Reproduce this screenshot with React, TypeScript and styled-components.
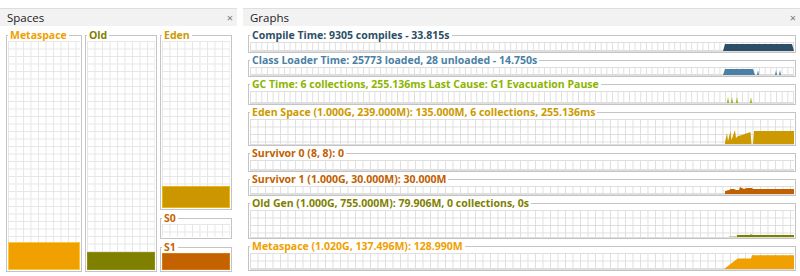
import React from 'react';
import styled, { createGlobalStyle } from 'styled-components';

const GlobalStyle = createGlobalStyle`
  html, body {
    margin: 0;
    padding: 0;
    background: #ffffff;
  }

  body {
    font-family: "Open Sans", "DejaVu Sans", sans-serif;
  }

  * {
    box-sizing: border-box;
  }
`;

type Space = {
  name: string;
  color: string;
  fill: string;
  edge: string;
  used: number;
  max: number;
};

type Shape = { points: string; fill?: string };

type Graph = {
  title: string;
  color: string;
  height: number;
  cell: number;
  shapes: Shape[];
};

const metaspace: Space = { name: 'Metaspace', color: '#f0a000', fill: '#f0a000', edge: '#f8c840', used: 128.99, max: 1044.48 };
const oldGen: Space = { name: 'Old', color: '#808000', fill: '#808000', edge: '#8f8f10', used: 79.906, max: 1024 };
const eden: Space = { name: 'Eden', color: '#cc9900', fill: '#cc9600', edge: '#e8b810', used: 135, max: 1024 };
const s0: Space = { name: 'S0', color: '#c86400', fill: '#c46200', edge: '#d87810', used: 0, max: 8 };
const s1: Space = { name: 'S1', color: '#c86400', fill: '#c46200', edge: '#d87810', used: 30, max: 30 };

const graphs: Graph[] = [
  {
    title: 'Compile Time: 9305 compiles - 33.815s',
    color: '#2c4e66',
    height: 9,
    cell: 5.67,
    shapes: [{ points: '1,9 3,2 70,2 72,9' }],
  },
  {
    title: 'Class Loader Time: 25773 loaded, 28 unloaded - 14.750s',
    color: '#4a80a4',
    height: 8,
    cell: 5.67,
    shapes: [
      { points: '1,8 3,2 31,2 33,8' },
      { points: '35,8 36,3 37,8' },
      { points: '53,8 54,3 55,8' },
      { points: '57,8 58,3 59,8' },
    ],
  },
  {
    title: 'GC Time: 6 collections, 255.136ms Last Cause: G1 Evacuation Pause',
    color: '#8cb400',
    height: 12,
    cell: 5.67,
    shapes: [
      { points: '5,12 6,6 7,12' },
      { points: '9,12 10,6 11,12' },
      { points: '14,12 15,6 16,12' },
      { points: '28,12 29,6 30,12' },
    ],
  },
  {
    title: 'Eden Space (1.000G, 239.000M): 135.000M, 6 collections, 255.136ms',
    color: '#cc9900',
    height: 25,
    cell: 7.5,
    shapes: [
      {
        points:
          '0,25 3,25 3,23 5,14 6,22 8.5,12 9.5,21 13,11 14,19 16,17 20,16 28.5,13 29.5,25 31,25 32,12 72,12 72,25',
      },
    ],
  },
  {
    title: 'Survivor 0 (8, 8): 0',
    color: '#c06000',
    height: 10,
    cell: 7.5,
    shapes: [],
  },
  {
    title: 'Survivor 1 (1.000G, 30.000M): 30.000M',
    color: '#c06000',
    height: 8,
    cell: 7.5,
    shapes: [{ points: '3,8 3,5 7,4 9,3 12,3 14,4 17,4 18,1 20,2 22,3 25,2 30,2 31,3 72,3 72,8' }],
  },
  {
    title: 'Old Gen (1.000G, 755.000M): 79.906M, 0 collections, 0s',
    color: '#7f7f00',
    height: 27,
    cell: 7.5,
    shapes: [
      { points: '7,27 7,26 15,26 15,27', fill: '#cfcf9a' },
      { points: '15,27 15,25 28,25 29,24 30,25 72,25 72,27' },
    ],
  },
  {
    title: 'Metaspace (1.020G, 137.496M): 128.990M',
    color: '#f0a000',
    height: 16,
    cell: 7.5,
    shapes: [{ points: '0,16 2,16 15,6 16,5.5 29,5.5 30,2.3 72,2.3 72,16' }],
  },
];

export default function App() {
  return (
    <>
      <GlobalStyle />
      <Page>
        {/* spaces */}
        <Panel $width={237}>
          <PanelHeader>
            <span>Spaces</span>
            <Close>×</Close>
          </PanelHeader>

          <SpacesBody>
            <SpaceFrame space={metaspace} />
            <SpaceFrame space={oldGen} />
            <Stack>
              <SpaceFrame space={eden} grow />
              <SpaceFrame space={s0} height={26} />
              <SpaceFrame space={s1} height={30} />
            </Stack>
          </SpacesBody>
        </Panel>

        {/* graphs */}
        <Panel>
          <PanelHeader>
            <span>Graphs</span>
            <Close>×</Close>
          </PanelHeader>

          <GraphsBody>
            {graphs.map(g => (
              <Frame key={g.title} $flush>
                <Legend $color={g.color}>{g.title}</Legend>
                <Plot $height={g.height} $cell={g.cell}>
                  <svg width={72} height={g.height} viewBox={`0 0 72 ${g.height}`}>
                    {g.shapes.map((s, i) => (
                      <polygon key={i} points={s.points} fill={s.fill ?? g.color} />
                    ))}
                  </svg>
                </Plot>
              </Frame>
            ))}
          </GraphsBody>
        </Panel>
      </Page>
    </>
  );
}

function SpaceFrame({ space, height, grow }: { space: Space; height?: number; grow?: boolean }) {
  const level = (space.used / space.max) * 100;

  return (
    <Frame $height={height} $grow={grow}>
      <Legend $color={space.color}>{space.name}</Legend>
      <Tank>
        {level > 0 && <Level $fill={space.fill} $edge={space.edge} style={{ height: `${level}%` }} />}
      </Tank>
    </Frame>
  );
}

const Page = styled.div`
  width: 800px;
  height: 276px;
  padding-top: 8px;

  display: flex;
  gap: 6px;

  overflow: hidden;
`;

const Panel = styled.section<{ $width?: number }>`
  flex: ${p => (p.$width ? `0 0 ${p.$width}px` : '1 1 auto')};
  min-width: 0;

  display: flex;
  flex-direction: column;
`;

const PanelHeader = styled.header`
  flex: 0 0 18px;

  padding: 0 4px 0 7px;

  background: #f2f2f2;
  border-top: 1px solid #dedede;

  display: flex;
  justify-content: space-between;
  align-items: center;

  font-size: 11.5px;
  color: #1b1b1b;
`;

const Close = styled.span`
  font-size: 11px;
  line-height: 1;
  color: #777777;
`;

const SpacesBody = styled.div`
  flex: 1;
  min-height: 0;

  padding: 4px 0 4px 6px;

  display: grid;
  grid-template-columns: 76px 72px 72px;
  column-gap: 3px;
`;

const Stack = styled.div`
  min-height: 0;

  display: flex;
  flex-direction: column;
  gap: 3px;
`;

const GraphsBody = styled.div`
  flex: 1;
  min-height: 0;

  padding: 4px 4px 0 5px;

  display: flex;
  flex-direction: column;
  gap: 2px;
`;

const Frame = styled.fieldset<{ $height?: number; $grow?: boolean; $flush?: boolean }>`
  margin: 0;
  padding: ${p => (p.$flush ? '0 1px' : '0 1px 1px')};
  min-width: 0;

  border: 1px solid #c4c4c4;

  display: flex;
  flex-direction: column;
  flex: ${p => (p.$height ? `0 0 ${p.$height}px` : p.$grow ? '1 1 0' : '0 0 auto')};
`;

const Legend = styled.legend<{ $color: string }>`
  padding: 0 2px;

  font-size: 10.5px;
  font-weight: 700;
  line-height: 11px;
  white-space: nowrap;
  color: ${p => p.$color};
`;

const gridLines = (cell: number, line: string) => `
  background-color: #ffffff;
  background-image:
    linear-gradient(to right, ${line} 1px, transparent 1px),
    linear-gradient(to bottom, ${line} 1px, transparent 1px);
  background-size: ${cell}px ${cell}px;
`;

const Tank = styled.div`
  flex: 1;
  min-height: 0;

  display: flex;
  flex-direction: column;
  justify-content: flex-end;

  ${gridLines(7.5, '#e6e6e6')}
`;

const Level = styled.div<{ $fill: string; $edge: string }>`
  background: ${p => p.$fill};
  border: 1px solid ${p => p.$edge};
`;

const Plot = styled.div<{ $height: number; $cell: number }>`
  flex: 0 0 ${p => p.$height}px;
  margin-top: 1px;

  display: flex;
  justify-content: flex-end;

  ${p => gridLines(p.$cell, '#dedede')}
  background-size: ${p => `${p.$cell}px ${p.$height > 12 ? 7.5 : p.$height - 1}px`};
  border-bottom: 1px solid #dedede;

  svg {
    display: block;
  }
`;
